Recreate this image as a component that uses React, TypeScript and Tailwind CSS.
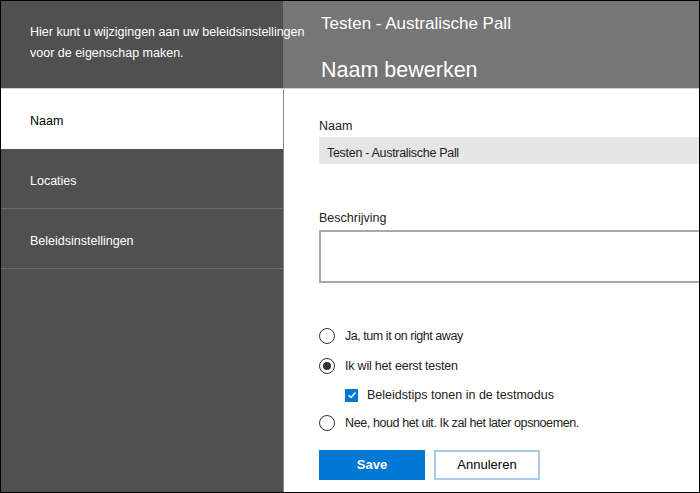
import { useState } from "react";

const font = { fontFamily: '"Liberation Sans", Arial, sans-serif' };

function Radio({ checked }: { checked: boolean }) {
  return (
    <span className="flex h-[16px] w-[16px] shrink-0 items-center justify-center rounded-full border-[1.5px] border-[#333]">
      {checked && <span className="h-[8px] w-[8px] rounded-full bg-[#333]" />}
    </span>
  );
}

export default function App() {
  const [choice, setChoice] = useState("test");
  const [tips, setTips] = useState(true);

  return (
    <div
      className="flex h-[493px] w-[700px] flex-col overflow-hidden border border-black bg-white"
      style={font}
    >
      {/* Header */}
      <div className="flex h-[88px] shrink-0 border-b border-[#cfcfcf]">
        <div className="relative z-10 w-[282px] shrink-0 whitespace-nowrap bg-[#505050] pl-[29px] pt-[21px] text-[12.5px] leading-[21px] text-white">
          Hier kunt u wijzigingen aan uw beleidsinstellingen
          <br />
          voor de eigenschap maken.
        </div>
        <div className="flex-1 bg-[#767676] pl-[38px] pt-[12px] text-white">
          <div className="text-[17px] leading-[22px]">Testen - Australische Pall</div>
          <div className="mt-[23px] text-[21.5px] leading-[24px]">Naam bewerken</div>
        </div>
      </div>

      <div className="flex min-h-0 flex-1">
        {/* Sidebar */}
        <nav className="flex w-[283px] shrink-0 flex-col border-r border-[#8a8a8a] bg-[#505050] text-[12.5px]">
          <div className="flex h-[60px] items-center bg-white pl-[29px] pt-[5px] text-black">Naam</div>
          <div className="flex h-[60px] items-center border-b border-[#6c6c6c] pl-[29px] pt-[5px] text-white">
            Locaties
          </div>
          <div className="flex h-[60px] items-center border-b border-[#6c6c6c] pl-[29px] pt-[5px] text-white">
            Beleidsinstellingen
          </div>
        </nav>

        {/* Form */}
        <main className="flex-1 pl-[35px] pt-[28px] text-[12.5px] text-[#222]">
          <div className="leading-[18px]">Naam</div>
          <div className="mt-[2px] flex h-[27px] items-center bg-[#e6e6e6] pl-[8px] pt-[5px] tracking-[-0.3px]">
            Testen - Australische Pall
          </div>

          <div className="mt-[45px] leading-[18px]">Beschrijving</div>
          <div className="mt-[3px] h-[53px] border-2 border-r-0 border-[#a8a8a8]" />

          <div className="mt-[38px] flex flex-col">
            <label className="flex h-[30px] items-center gap-[10px]" onClick={() => setChoice("on")}>
              <Radio checked={choice === "on"} />
              <span className="tracking-[-0.45px]">Ja, tum it on right away</span>
            </label>
            <label className="flex h-[30px] items-center gap-[10px]" onClick={() => setChoice("test")}>
              <Radio checked={choice === "test"} />
              <span className="tracking-[-0.2px]">Ik wil het eerst testen</span>
            </label>
            <label className="ml-[26px] flex h-[28px] items-center gap-[9px]" onClick={() => setTips(!tips)}>
              <span className="flex h-[13px] w-[13px] items-center justify-center bg-[#0078d4]">
                {tips && (
                  <svg width="10" height="10" viewBox="0 0 10 10" fill="none">
                    <path d="M1.5 5.2 L4 7.5 L8.5 2.5" stroke="white" strokeWidth="1.3" />
                  </svg>
                )}
              </span>
              <span>Beleidstips tonen in de testmodus</span>
            </label>
            <label className="flex h-[28px] items-center gap-[10px]" onClick={() => setChoice("off")}>
              <Radio checked={choice === "off"} />
              <span className="tracking-[-0.4px]">Nee, houd het uit. Ik zal het later opsnoemen.</span>
            </label>
          </div>

          <div className="mt-[13px] flex gap-[9px]">
            <button className="h-[30px] w-[106px] bg-[#0078d4] text-[13px] font-bold text-white">
              Save
            </button>
            <button className="h-[30px] w-[106px] border-2 border-[#a9cbe9] bg-white text-[13px] text-black">
              Annuleren
            </button>
          </div>
        </main>
      </div>
    </div>
  );
}
